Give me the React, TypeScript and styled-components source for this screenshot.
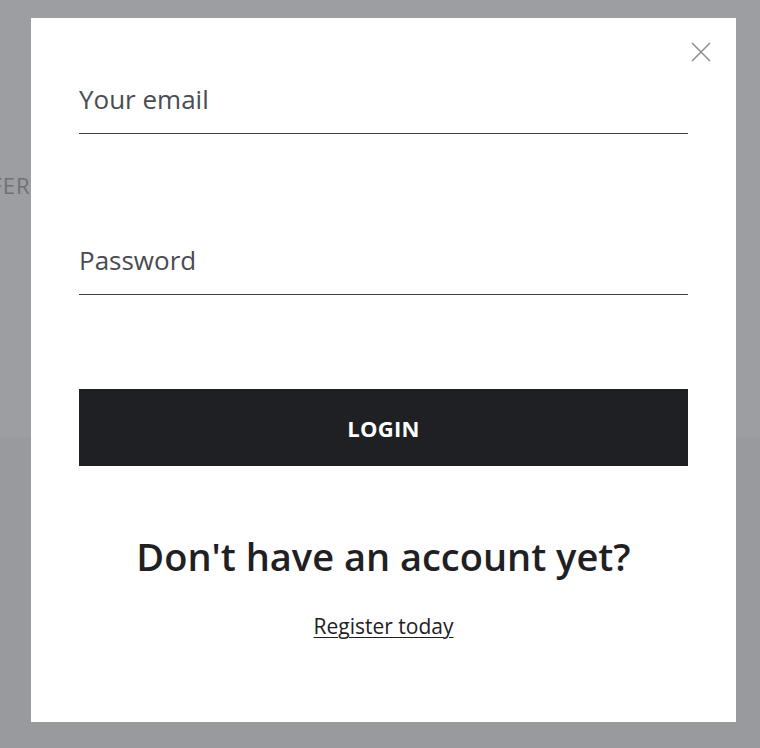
import React from 'react';
import styled, { createGlobalStyle } from 'styled-components';

const GlobalStyle = createGlobalStyle`
  html, body {
    margin: 0;
    padding: 0;
    height: 100%;
    overflow: hidden;
  }
  body {
    font-family: "Open Sans", Lato, sans-serif;
    background: #999a9e;
  }
`;

const Page = styled.div`
  height: 748px;
  display: flex;
  flex-direction: column;
`;

const Hero = styled.div`
  height: 437px;
  background: #9d9ea2;
  padding-top: 170px;
  box-sizing: border-box;
`;

const HeroLabel = styled.div`
  margin-left: -40px;
  font-size: 22px;
  letter-spacing: 1px;
  color: #707176;
  font-weight: 400;
`;

const Overlay = styled.div`
  position: fixed;
  inset: 0;
`;

const Modal = styled.div`
  position: absolute;
  left: 31px;
  top: 18px;
  width: 705px;
  height: 704px;
  background: #fff;
  box-sizing: border-box;
  padding: 65px 48px 0;
  display: flex;
  flex-direction: column;
`;

const CloseButton = styled.button`
  position: absolute;
  top: 24px;
  right: 25px;
  width: 20px;
  height: 20px;
  padding: 0;
  border: none;
  background: none;
  cursor: pointer;
  display: flex;
  align-items: center;
  justify-content: center;
`;

const Field = styled.label<{ $gap?: number }>`
  display: block;
  margin-bottom: ${(p) => p.$gap ?? 0}px;
`;

const Input = styled.input`
  display: block;
  width: 100%;
  box-sizing: border-box;
  border: none;
  border-bottom: 1px solid #3f4046;
  outline: none;
  padding: 0 0 18px;
  font-family: "Open Sans", Lato, sans-serif;
  font-size: 26px;
  line-height: 32px;
  color: #3f4046;
  background: transparent;

  &::placeholder {
    color: #4a4b52;
    opacity: 1;
  }
`;

const LoginButton = styled.button`
  width: 100%;
  height: 77px;
  border: none;
  background: #1f2024;
  color: #fff;
  font-family: "Open Sans", Lato, sans-serif;
  font-size: 22px;
  font-weight: 700;
  letter-spacing: 0.3px;
  cursor: pointer;
`;

const Footer = styled.div`
  display: flex;
  flex-direction: column;
  align-items: center;
  padding-top: 67px;
  gap: 33px;
`;

const Heading = styled.h2`
  margin: 0;
  font-size: 38px;
  font-weight: 600;
  line-height: 46px;
  color: #1f2024;
`;

const RegisterLink = styled.a`
  font-size: 21px;
  color: #1f2024;
  text-decoration: underline;
  text-underline-offset: 3px;
  text-decoration-thickness: 1px;
`;

const CloseIcon = () => (
  <svg width="20" height="20" viewBox="0 0 20 20" fill="none">
    <path d="M1 1L19 19M19 1L1 19" stroke="#8a8c94" strokeWidth="1.5" />
  </svg>
);

const App: React.FC = () => (
  <>
    <GlobalStyle />
    <Page>
      <Hero>
        <HeroLabel>OFFERS</HeroLabel>
      </Hero>
    </Page>
    <Overlay>
      <Modal>
        <CloseButton aria-label="Close">
          <CloseIcon />
        </CloseButton>
        <Field $gap={110}>
          <Input type="email" placeholder="Your email" />
        </Field>
        <Field $gap={94}>
          <Input type="password" placeholder="Password" />
        </Field>
        <LoginButton>LOGIN</LoginButton>
        <Footer>
          <Heading>Don't have an account yet?</Heading>
          <RegisterLink href="#">Register today</RegisterLink>
        </Footer>
      </Modal>
    </Overlay>
  </>
);

export default App;
